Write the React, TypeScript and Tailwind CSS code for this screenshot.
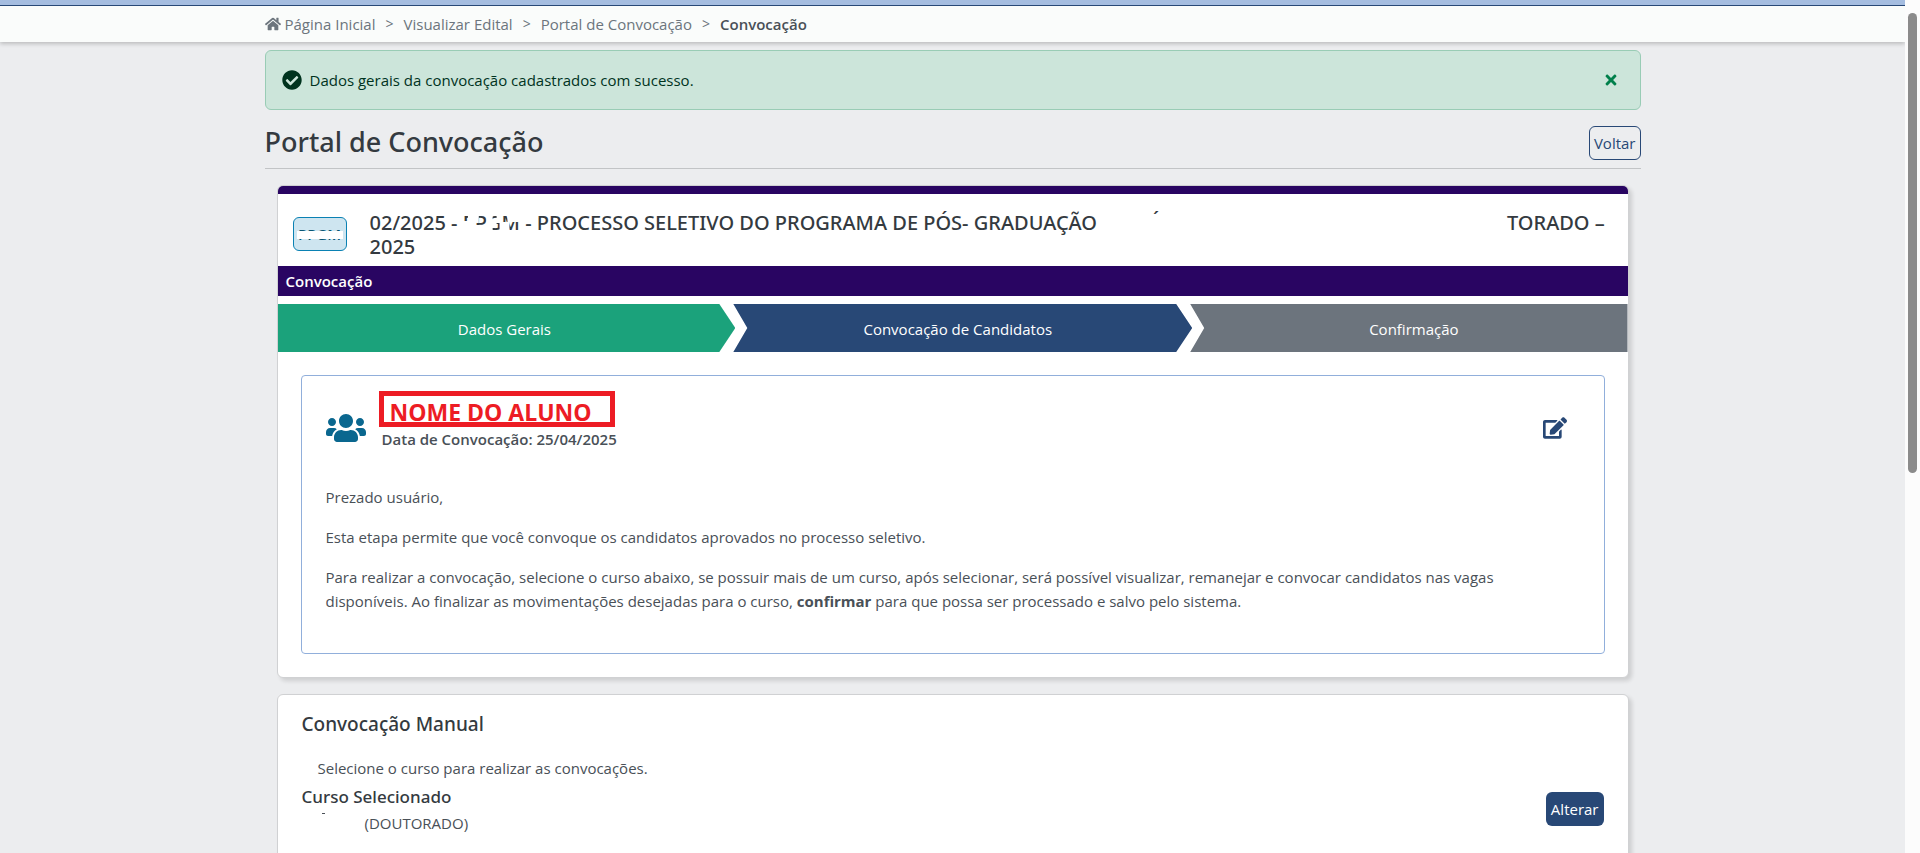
import { FaCheckCircle, FaEdit, FaHome, FaTimes, FaUsers } from "react-icons/fa";

const breadcrumbs = ["Página Inicial", "Visualizar Edital", "Portal de Convocação"];

const steps = [
  {
    label: "Dados Gerais",
    style:
      "flex-[462] pr-1 bg-[#1ba27b] [clip-path:polygon(0_0,calc(100%-16px)_0,100%_50%,calc(100%-16px)_100%,0_100%)]",
  },
  {
    label: "Convocação de Candidatos",
    style:
      "flex-[457] -ml-0.5 pr-2.5 bg-[#284876] [clip-path:polygon(0_0,calc(100%-16px)_0,100%_50%,calc(100%-16px)_100%,0_100%,14px_50%)]",
  },
  {
    label: "Confirmação",
    style: "flex-[435] -ml-0.5 pl-2.5 bg-[#6c747d] [clip-path:polygon(0_0,100%_0,100%_100%,0_100%,14px_50%)]",
  },
];

export default function App() {
  return (
    <div className="flex h-screen bg-[#ecedef] font-['Open_Sans','Noto_Sans',sans-serif] text-[15px] leading-6 text-[#495057]">
      <div className="min-w-0 flex-1 overflow-hidden">
        {/* Breadcrumb */}
        <header className="h-[42px] border-t-[5px] border-[#a5bde0] bg-[#fafcfb] shadow-[0_2px_4px_rgba(0,0,0,0.2)]">
          <div className="h-full border-t border-[#284876]">
            <nav className="mx-auto flex h-full max-w-[1376px] items-center text-[#6c757d]">
              {breadcrumbs.map((item, i) => (
                <span key={item} className="flex items-center">
                  <a href="#" className="flex items-center gap-1">
                    {i === 0 && <FaHome className="size-4" />}
                    {item}
                  </a>
                  <span className="px-2.5 text-sm">&gt;</span>
                </span>
              ))}
              <span className="font-semibold text-[#495057]">Convocação</span>
            </nav>
          </div>
        </header>

        <main className="mx-auto max-w-[1376px] pt-2">
          {/* Alert */}
          <div
            role="alert"
            className="flex h-[60px] items-center rounded-md border border-[#99ccb5] bg-[#cce5da] pr-[21px] pl-4 text-[#00331e]"
          >
            <FaCheckCircle className="mr-2 size-5" />
            <span className="flex-1">Dados gerais da convocação cadastrados com sucesso.</span>
            <button type="button" aria-label="Fechar" className="text-[#00804b]">
              <FaTimes className="size-4" />
            </button>
          </div>

          {/* Page title */}
          <div className="mt-4 flex items-start justify-between border-b border-[#c2c4c6] pb-2">
            <h1 className="font-['Noto_Sans',sans-serif] text-[27px] leading-8 font-medium text-[#343a40]">
              Portal de Convocação
            </h1>
            <button
              type="button"
              className="h-[34px] rounded-md border border-[#284876] px-1 text-[#284876]"
            >
              Voltar
            </button>
          </div>

          <div className="px-3">
            {/* Edital */}
            <section className="mt-4 overflow-hidden rounded-md border border-[#d0d1d3] bg-white shadow-[3px_3px_4px_rgba(0,0,0,0.13)]">
              <div className="h-2 bg-[#290562]" />
              <div className="flex h-[72px] items-start pt-[17px] pl-[15px]">
                <div className="relative mt-[6px] mr-[23px] flex h-[34px] w-[54px] shrink-0 items-center justify-center rounded-md border border-[#0a81b3] bg-[#cee5f0] font-semibold text-[#085674]">
                  PPGM
                  <div className="absolute top-[13px] right-[3px] left-[3px] h-2 bg-white" />
                </div>
                <h2 className="pr-4 font-['Noto_Sans',sans-serif] text-xl leading-6 font-medium text-[#343a40]">
                  02/2025 -{" "}
                  <span className="relative inline-block">
                    PPGM
                    <svg
                      viewBox="0 0 58 24"
                      className="absolute top-0 left-0 h-6 w-full"
                      fill="#fff"
                      aria-hidden="true"
                    >
                      <path d="M0 10h11v12H0zM5 3h10v9H5zM11 14h14v8H11zM11 3h5v9h-5zM24 3h6v19h-6zM29 9h5v8h-5zM34 3h4v9h-4zM37 11h10v11H37zM45 3h14v8H45z" />
                    </svg>
                  </span>{" "}
                  - PROCESSO SELETIVO DO PROGRAMA DE PÓS- GRADUAÇÃO
                  <span className="inline-block w-[410px] pl-14">
                    <span className="relative -top-1">´</span>
                  </span>
                  TORADO – 2025
                </h2>
              </div>
              <h3 className="bg-[#290562] px-2 leading-[30px] font-semibold text-white">Convocação</h3>

              <ol className="mt-2 flex h-12 text-white">
                {steps.map((step) => (
                  <li key={step.label} className={`flex items-center justify-center pt-0.5 ${step.style}`}>
                    {step.label}
                  </li>
                ))}
              </ol>

              <div className="mx-[23px] my-[23px] rounded border border-[#91afdb] px-6 pt-[15px] pb-10">
                <div className="flex items-center">
                  <FaUsers className="mt-3.5 size-10 text-[#0a678f]" />
                  <div className="ml-[13px] flex-1">
                    <div className="h-9 w-[236px] border-5 border-[#ed1c24] px-1.5 text-[23px] leading-8 font-bold text-[#ed1c24]">
                      NOME DO ALUNO
                    </div>
                    <p className="ml-[3px] font-semibold">Data de Convocação: 25/04/2025</p>
                  </div>
                  <button type="button" aria-label="Editar" className="mt-3.5 mr-[13px] text-[#284876]">
                    <FaEdit className="size-6" />
                  </button>
                </div>
                <div className="mt-[34px] space-y-4">
                  <p>Prezado usuário,</p>
                  <p>Esta etapa permite que você convoque os candidatos aprovados no processo seletivo.</p>
                  <p className="pr-14">
                    Para realizar a convocação, selecione o curso abaixo, se possuir mais de um curso, após
                    selecionar, será possível visualizar, remanejar e convocar candidatos nas vagas
                    disponíveis. Ao finalizar as movimentações desejadas para o curso, <b>confirmar</b> para
                    que possa ser processado e salvo pelo sistema.
                  </p>
                </div>
              </div>
            </section>

            {/* Convocação manual */}
            <section className="mt-4 h-64 rounded-md border border-[#d0d1d3] bg-white px-6 pt-[15px] shadow-[3px_3px_4px_rgba(0,0,0,0.13)]">
              <h2 className="font-['Noto_Sans',sans-serif] text-[19px] leading-7 font-medium text-[#343a40]">
                Convocação Manual
              </h2>
              <p className="mt-[18px] ml-4">Selecione o curso para realizar as convocações.</p>
              <div className="mt-[3px] flex items-center justify-between">
                <div>
                  <h3 className="font-['Noto_Sans',sans-serif] text-[17px] leading-7 font-medium text-[#343a40]">
                    Curso Selecionado
                  </h3>
                  <p className="flex pl-5">
                    <span className="mt-0.5 mr-10 h-px w-[3px] bg-[#495057]" />
                    (DOUTORADO)
                  </p>
                </div>
                <button type="button" className="h-[34px] rounded-md bg-[#284876] px-[5px] text-white">
                  Alterar
                </button>
              </div>
            </section>
          </div>
        </main>
      </div>

      {/* Scroll bar */}
      <div className="w-[15px] shrink-0 bg-[#fcfcfc] pt-[13px] pl-[3px]">
        <div className="h-[460px] w-[9px] rounded-full bg-[#8b8b8b]" />
      </div>
    </div>
  );
}
